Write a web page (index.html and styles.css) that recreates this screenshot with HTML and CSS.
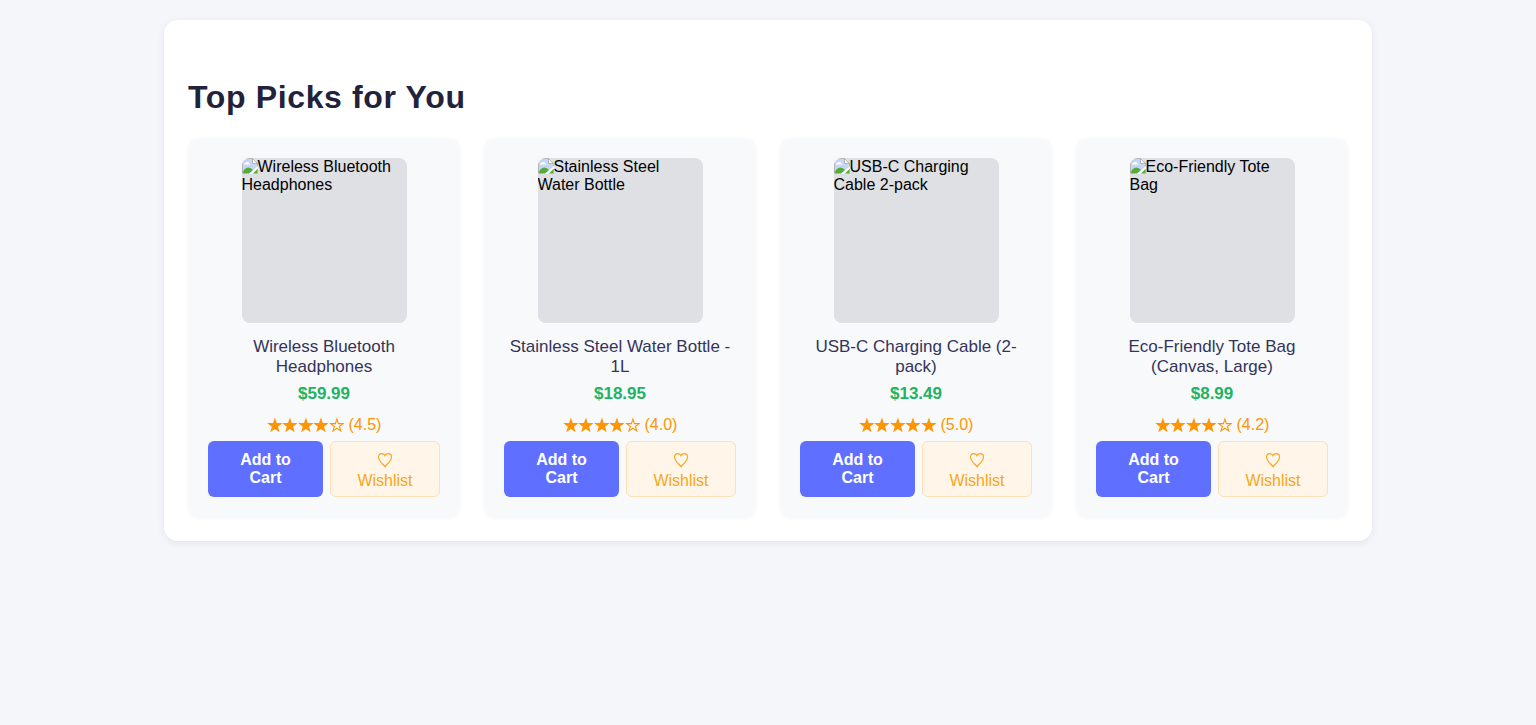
FILE: index.html
```html
<!DOCTYPE html>
<html lang="en">
<head>
<meta charset="utf-8">
<title>Top Picks for You</title>
<link rel="stylesheet" href="styles.css">
</head>
<body>
<svg width="0" height="0" class="defs" aria-hidden="true">
  <symbol id="missing" viewBox="0 0 16 16">
    <path d="M.5.5h10l5 5v10H.5z" fill="#c6d7f5"/>
    <path d="M2 6.500c0-1 .8-1.500 1.600-1.500C4 3.700 6.700 3.600 7 5c1.200 0 1.500 1.500.5 1.500z" fill="#fff"/>
    <path d="M1 15v-1.500C3 10 6 8.500 8.500 10L11 12l-3.500 3z" fill="#55ad37"/>
    <path d="M7 16l9-8v2.500L10.500 16z" fill="#fff"/>
    <path d="M11.500 15l4-4v4z" fill="#55ad37"/>
    <path d="M10.500.5v5h5z" fill="#fff"/>
    <path d="M7 15.500H.5V.5h10l5 5V8M10.500.5v5h5M15.500 11v4.500h-4" fill="none" stroke="#aaa" stroke-width=".8"/>
  </symbol>
  <symbol id="full" viewBox="0 0 15.6 16">
    <path d="M7.900.6L9.800 6.100H15.600L11 9.700L12.700 15.300L7.900 11.900L3.100 15.300L4.800 9.700L.2 6.100H6z" fill="currentColor"/>
  </symbol>
  <symbol id="empty" viewBox="0 0 15.6 16">
    <path d="M7.900 2.100L9.400 6.600H14.100L10.400 9.500L11.800 13.900L7.900 11.200L4 13.900L5.400 9.500L1.700 6.600H6.400z" fill="none" stroke="currentColor" stroke-width="1.100"/>
  </symbol>
  <symbol id="heart" viewBox="0 0 16 16">
    <path d="M8 14.800C6.800 12.500 1.500 9.500 1.500 5C1.500 2.900 2.800 1.600 4.700 1.600C6.300 1.600 7.500 2.300 8 3.600C8.500 2.300 9.700 1.600 11.300 1.600C13.200 1.600 14.500 2.900 14.500 5C14.500 9.500 9.200 12.500 8 14.800z" fill="none" stroke="currentColor" stroke-width="1.100"/>
  </symbol>
</svg>
<main class="panel">
  <h1 class="heading">Top Picks for You</h1>
  <div class="grid">
    <article class="card">
      <div class="photo"><svg class="missing"><use href="#missing"/></svg>Wireless Bluetooth Headphones</div>
      <div class="name">Wireless Bluetooth Headphones</div>
      <div class="price">$59.99</div>
      <div class="rating"><span class="stars"><svg><use href="#full"/></svg><svg><use href="#full"/></svg><svg><use href="#full"/></svg><svg><use href="#full"/></svg><svg><use href="#empty"/></svg></span>(4.5)</div>
      <div class="actions"><button class="cart">Add to Cart</button><button class="wish"><svg class="heart"><use href="#heart"/></svg>Wishlist</button></div>
    </article>
    <article class="card">
      <div class="photo"><svg class="missing"><use href="#missing"/></svg>Stainless Steel Water Bottle</div>
      <div class="name">Stainless Steel Water Bottle - 1L</div>
      <div class="price">$18.95</div>
      <div class="rating"><span class="stars"><svg><use href="#full"/></svg><svg><use href="#full"/></svg><svg><use href="#full"/></svg><svg><use href="#full"/></svg><svg><use href="#empty"/></svg></span>(4.0)</div>
      <div class="actions"><button class="cart">Add to Cart</button><button class="wish"><svg class="heart"><use href="#heart"/></svg>Wishlist</button></div>
    </article>
    <article class="card">
      <div class="photo"><svg class="missing"><use href="#missing"/></svg>USB-C Charging Cable 2-pack</div>
      <div class="name">USB-C Charging Cable (2-pack)</div>
      <div class="price">$13.49</div>
      <div class="rating"><span class="stars"><svg><use href="#full"/></svg><svg><use href="#full"/></svg><svg><use href="#full"/></svg><svg><use href="#full"/></svg><svg><use href="#full"/></svg></span>(5.0)</div>
      <div class="actions"><button class="cart">Add to Cart</button><button class="wish"><svg class="heart"><use href="#heart"/></svg>Wishlist</button></div>
    </article>
    <article class="card">
      <div class="photo"><svg class="missing"><use href="#missing"/></svg>Eco-Friendly Tote Bag</div>
      <div class="name">Eco-Friendly Tote Bag (Canvas, Large)</div>
      <div class="price">$8.99</div>
      <div class="rating"><span class="stars"><svg><use href="#full"/></svg><svg><use href="#full"/></svg><svg><use href="#full"/></svg><svg><use href="#full"/></svg><svg><use href="#empty"/></svg></span>(4.2)</div>
      <div class="actions"><button class="cart">Add to Cart</button><button class="wish"><svg class="heart"><use href="#heart"/></svg>Wishlist</button></div>
    </article>
  </div>
</main>
</body>
</html>
```
FILE: styles.css
```css
* { box-sizing: border-box; }
body {
  margin: 0;
  padding: 20px 0;
  background: #f5f6fa;
  font: 16px/18px "Liberation Sans", Arial, sans-serif;
  color: #000;
}
.defs { display: none; }
.panel {
  width: 1208px;
  height: 521px;
  margin: 0 auto;
  padding: 58px 24px 24px;
  background: #fff;
  border-radius: 14px;
  box-shadow: 0 2px 8px rgba(34, 34, 59, .08);
}
.heading {
  margin: 0 0 22px;
  font-size: 32px;
  line-height: 38px;
  letter-spacing: .64px;
  color: #22223b;
}
.grid { display: grid; grid-template-columns: repeat(4, 272px); gap: 24px; }
.card {
  height: 379px;
  padding: 20px;
  background: #f8f9fb;
  border-radius: 10px;
  box-shadow: 0 1px 4px rgba(34, 34, 59, .04);
  text-align: center;
}
.photo {
  width: 165px;
  height: 165px;
  margin: 0 auto 14px;
  overflow: hidden;
  border-radius: 8px;
  background: #dfe0e4;
  text-align: left;
}
.missing { width: 16px; height: 16px; vertical-align: -2px; }
.name { font-size: 17px; line-height: 20px; color: #34345a; }
.price { margin-top: 7px; font-weight: bold; font-size: 17px; line-height: 20px; color: #20b362; }
.rating {
  display: flex;
  justify-content: center;
  align-items: center;
  gap: 4px;
  margin-top: 10px;
  height: 21px;
  line-height: 21px;
  color: #ff9500;
}
.stars { display: flex; }
.stars svg { width: 15.6px; height: 16px; }
.actions { display: flex; gap: 7px; margin-top: 6px; }
.cart, .wish { height: 56px; border-radius: 6px; font: 16px/18px "Liberation Sans", Arial, sans-serif; }
.cart { width: 115px; padding: 0 25px; border: 0; background: #5f6fff; color: #fff; font-weight: bold; }
.wish { width: 110px; padding: 3px 20px 0; border: 1px solid #ffe0b2; background: #fff6e9; color: #f5a623; }
.heart { display: block; width: 16px; height: 16px; margin: 0 auto 4px; }
```
